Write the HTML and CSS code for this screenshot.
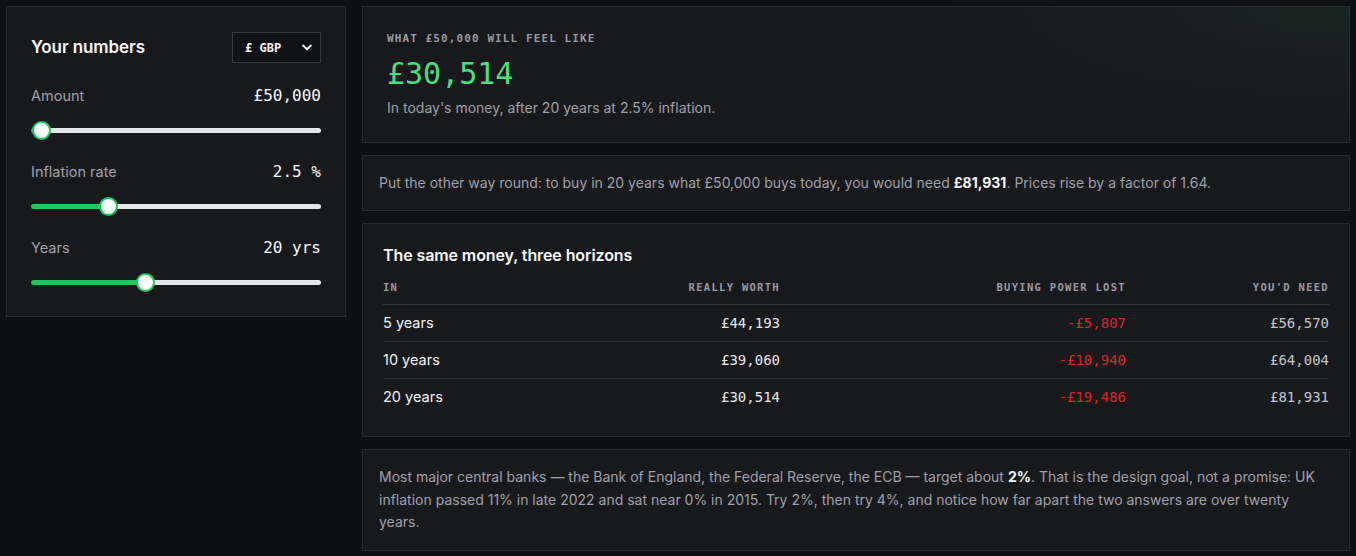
FILE: index.html
```html
<!DOCTYPE html>
<html lang="en">
<head>
<meta charset="utf-8">
<title>Inflation calculator</title>
<link rel="stylesheet" href="styles.css">
</head>
<body>
<main class="layout">
  <aside class="panel controls">
    <div class="controls-head">
      <h2 class="heading">Your numbers</h2>
      <div class="select">
        <span>£ GBP</span>
        <svg width="10" height="7" viewBox="0 0 10 7" aria-hidden="true"><path d="M1.2 1.5 L5 5.2 L8.8 1.5" fill="none" stroke="#f3f4f6" stroke-width="1.9" stroke-linecap="round" stroke-linejoin="round"/></svg>
      </div>
    </div>
    <div class="field">
      <div class="field-row"><span class="field-label">Amount</span><span class="field-value">£50,000</span></div>
      <input class="range" type="range" min="0" max="10000000" value="50000" style="--fill: 3.6%">
    </div>
    <div class="field">
      <div class="field-row"><span class="field-label">Inflation rate</span><span class="field-value">2.5 %</span></div>
      <input class="range" type="range" min="0" max="10" step="0.1" value="2.5" style="--fill: 26.5%">
    </div>
    <div class="field">
      <div class="field-row"><span class="field-label">Years</span><span class="field-value">20 yrs</span></div>
      <input class="range" type="range" min="1" max="50" value="20" style="--fill: 39.5%">
    </div>
  </aside>

  <section class="results">
    <div class="panel hero">
      <div class="eyebrow">WHAT £50,000 WILL FEEL LIKE</div>
      <div class="big">£30,514</div>
      <p class="hero-sub">In today's money, after 20 years at 2.5% inflation.</p>
    </div>

    <div class="panel note note-single">
      <p>Put the other way round: to buy in 20 years what £50,000 buys today, you would need <strong>£81,931</strong>. Prices rise by a factor of 1.64.</p>
    </div>

    <div class="panel table-card">
      <h3 class="heading small">The same money, three horizons</h3>
      <table class="horizons">
        <thead>
          <tr><th class="c1">IN</th><th class="c2">REALLY WORTH</th><th class="c3">BUYING POWER LOST</th><th class="c4">YOU'D NEED</th></tr>
        </thead>
        <tbody>
          <tr><td class="c1">5 years</td><td class="c2 num">£44,193</td><td class="c3 num loss">-£5,807</td><td class="c4 num need">£56,570</td></tr>
          <tr><td class="c1">10 years</td><td class="c2 num">£39,060</td><td class="c3 num loss">-£10,940</td><td class="c4 num need">£64,004</td></tr>
          <tr><td class="c1">20 years</td><td class="c2 num">£30,514</td><td class="c3 num loss">-£19,486</td><td class="c4 num need">£81,931</td></tr>
        </tbody>
      </table>
    </div>

    <div class="panel note">
      <p>Most major central banks — the Bank of England, the Federal Reserve, the ECB — target about <strong>2%</strong>. That is the design goal, not a promise: UK inflation passed 11% in late 2022 and sat near 0% in 2015. Try 2%, then try 4%, and notice how far apart the two answers are over twenty years.</p>
    </div>
  </section>
</main>
</body>
</html>
```

FILE: styles.css
```css
* { box-sizing: border-box; }

html, body {
  margin: 0;
  background: #0f1013;
}

body {
  font-family: Inter, "Noto Sans", "Liberation Sans", sans-serif;
  color: #e5e7eb;
  padding: 6px;
}

.layout {
  display: flex;
  gap: 16px;
  align-items: flex-start;
}

.panel {
  background: #18191d;
  border: 1px solid #2b2c31;
}

.controls {
  width: 340px;
  flex: none;
  padding: 23px 24px 31px;
}

.controls-head {
  display: flex;
  align-items: center;
  justify-content: space-between;
  margin-bottom: 21px;
}

.heading {
  margin: 0;
  font-size: 17px;
  font-weight: 600;
  color: #f9fafb;
  letter-spacing: -0.1px;
}

.select {
  width: 89px;
  height: 31px;
  background: #101114;
  border: 1px solid #3a3b41;
  display: flex;
  align-items: center;
  justify-content: space-between;
  padding: 0 8px 0 12px;
  font-family: "DejaVu Sans Mono", "Liberation Mono", monospace;
  font-size: 12px;
  font-weight: 700;
  color: #f3f4f6;
  margin-top: 2px;
}

.field + .field { margin-top: 27px; }

.field-row {
  display: flex;
  justify-content: space-between;
  align-items: baseline;
  height: 24px;
  line-height: 24px;
}

.field-label {
  font-size: 14.5px;
  color: #a1a1aa;
}

.field-value {
  font-family: "DejaVu Sans Mono", "Liberation Mono", monospace;
  font-size: 16px;
  color: #f9fafb;
}

.range {
  -webkit-appearance: none;
  appearance: none;
  display: block;
  width: 100%;
  height: 5px;
  margin: 20px 0 0;
  border-radius: 3px;
  background: linear-gradient(to right, #22c55e var(--fill), #e5e7eb var(--fill));
  outline: none;
}

.range::-webkit-slider-thumb {
  -webkit-appearance: none;
  appearance: none;
  width: 19px;
  height: 19px;
  border-radius: 50%;
  background: #ffffff;
  border: 2px solid #22c55e;
}

.results {
  flex: 1;
  display: flex;
  flex-direction: column;
  gap: 12px;
  min-width: 0;
}

.hero {
  padding: 24px 24px 23px;
  background:
    radial-gradient(ellipse 60% 120% at 100% 0%, rgba(34, 197, 94, 0.07), rgba(34, 197, 94, 0) 70%),
    #18191d;
}

.eyebrow {
  font-family: "DejaVu Sans Mono", "Liberation Mono", monospace;
  font-size: 11px;
  font-weight: 700;
  letter-spacing: 1.1px;
  color: #9a9aa2;
  line-height: 16px;
}

.big {
  font-family: "DejaVu Sans Mono", "Liberation Mono", monospace;
  font-size: 30px;
  line-height: 38px;
  color: #4ade80;
  margin-top: 8px;
}

.hero-sub {
  margin: 4px 0 0;
  font-size: 14px;
  line-height: 22px;
  color: #a1a1aa;
}

.note {
  padding: 16px;
}

.note p {
  margin: 0;
  font-size: 14px;
  line-height: 22.5px;
  color: #a1a1aa;
}

.note-single p {
  line-height: 22px;
}

.note strong {
  color: #f9fafb;
  font-weight: 700;
}

.table-card {
  padding: 20px 20px 21px;
}

.heading.small {
  font-size: 16px;
  line-height: 22px;
  margin-bottom: 14px;
}

.horizons {
  width: 100%;
  border-collapse: collapse;
  table-layout: fixed;
}

.horizons .c1 { width: 200px; text-align: left; }
.horizons .c2 { width: 197px; text-align: right; }
.horizons .c3 { width: 346px; text-align: right; }
.horizons .c4 { text-align: right; }

.horizons th {
  font-family: "DejaVu Sans Mono", "Liberation Mono", monospace;
  font-size: 10.5px;
  font-weight: 700;
  letter-spacing: 1.3px;
  color: #9a9aa2;
  padding: 0 0 10px;
  line-height: 14px;
  border-bottom: 1px solid #3a3b41;
}

.horizons td {
  padding: 10px 0;
  line-height: 16px;
  font-size: 14.5px;
  color: #f3f4f6;
  border-bottom: 1px solid #2b2c31;
}

.horizons tbody tr:last-child td { border-bottom: none; }

.horizons td.num {
  font-family: "DejaVu Sans Mono", "Liberation Mono", monospace;
  font-size: 14px;
  color: #e8e8ea;
}

.horizons td.loss { color: #dc2626; }
.horizons td.need { color: #c4c5ca; }
```
